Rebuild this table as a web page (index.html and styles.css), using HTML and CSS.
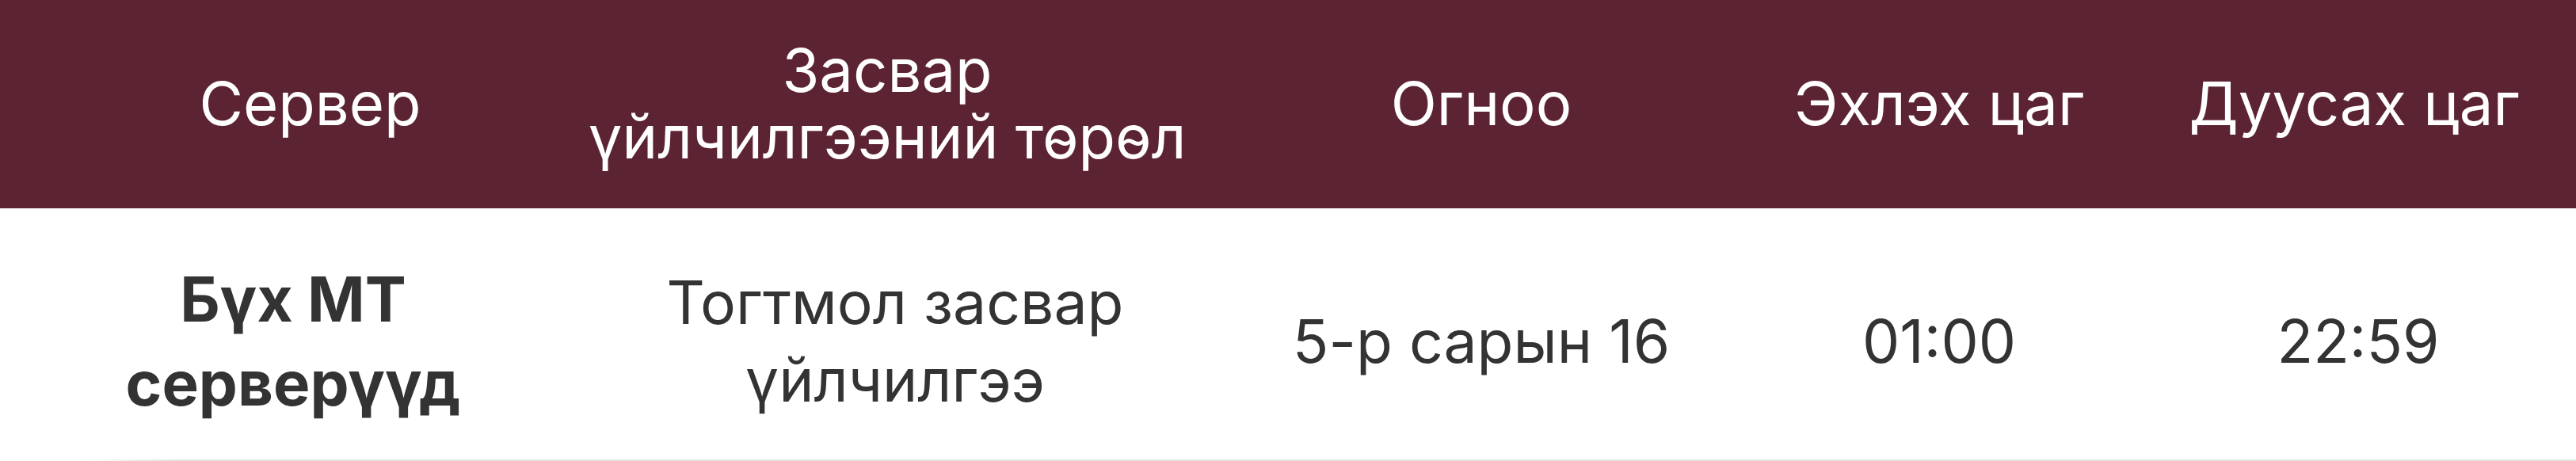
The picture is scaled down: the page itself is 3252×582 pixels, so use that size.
FILE: index.html
```html
<!DOCTYPE html>
<html lang="mn">
<head>
<meta charset="utf-8">
<title>Засвар үйлчилгээ</title>
<link rel="stylesheet" href="styles.css">
</head>
<body>
<div class="schedule">
  <div class="row head">
    <div class="cell c1 h1">Сервер</div>
    <div class="cell c2">Засвар<br>үйлчилгээний төрөл</div>
    <div class="cell c3">Огноо</div>
    <div class="cell c4">Эхлэх цаг</div>
    <div class="cell c5 h5">Дуусах цаг</div>
  </div>
  <div class="row body">
    <div class="cell c1 strong">Бүх МТ<br>серверүүд</div>
    <div class="cell c2 d2">Тогтмол засвар<br>үйлчилгээ</div>
    <div class="cell c3">5-р сарын 16</div>
    <div class="cell c4">01:00</div>
    <div class="cell c5 d5">22:59</div>
  </div>
</div>
</body>
</html>
```
FILE: styles.css
```css
html, body {
  margin: 0;
  padding: 0;
  background: #ffffff;
}
body {
  font-family: Inter, "Noto Sans", "DejaVu Sans", sans-serif;
  width: 3252px;
  height: 582px;
  overflow: hidden;
}
.schedule {
  display: flex;
  flex-direction: column;
}
.row {
  display: grid;
  grid-template-columns: 740px 760px 740px 416px 596px;
  align-items: center;
}
.cell {
  text-align: center;
  white-space: nowrap;
}
.head {
  height: 263px;
  box-sizing: border-box;
  padding-bottom: 4px;
  background: #5c2333;
  color: #ffffff;
  font-size: 76px;
  line-height: 84px;
  font-weight: 400;
}
.body {
  height: 319px;
  box-sizing: border-box;
  padding-top: 17px;
  color: #333333;
  font-size: 75px;
  line-height: 98px;
  background: linear-gradient(to right, rgba(229,229,229,0) 96px, #e4e4e4 220px) left bottom / 100% 2px no-repeat;
}
.strong {
  font-weight: 700;
  font-size: 78px;
  line-height: 106px;
}
.h1 { padding-left: 43px; }
.d2 { padding-left: 20px; }
.h5 { padding-left: 36px; }
.d5 { padding-left: 46px; }
```
